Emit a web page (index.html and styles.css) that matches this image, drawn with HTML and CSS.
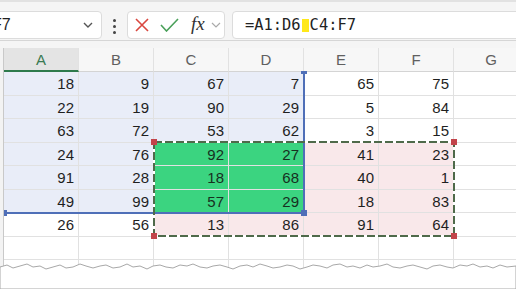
FILE: index.html
```html
<!DOCTYPE html>
<html lang="en">
<head>
  <meta charset="UTF-8" />
  <title>Sheet</title>
  <link rel="stylesheet" href="styles.css">
</head>
<body>
  <div class="toolbar">
    <div class="namebox">
      <span>F7</span>
      <svg class="chev" width="10" height="6" viewBox="0 0 10 6"><path d="M1 1l4 4 4-4" fill="none" stroke="#555" stroke-width="1.4"/></svg>
    </div>
    <div class="dots"><i></i><i></i><i></i></div>
    <div class="fxbox">
      <svg class="cancel" width="14" height="14" viewBox="0 0 14 14"><path d="M1 1l12 12M13 1L1 13" stroke="#d9473f" stroke-width="1.6" fill="none"/></svg>
      <svg class="enter" width="19" height="14" viewBox="0 0 19 14"><path d="M1 7l5.5 6L18 1" stroke="#4aa05a" stroke-width="1.6" fill="none"/></svg>
      <span class="fx">fx</span>
      <svg class="chev small" width="10" height="6" viewBox="0 0 10 6"><path d="M1 1l4 4 4-4" fill="none" stroke="#aaa" stroke-width="1.2"/></svg>
    </div>
    <div class="formula">=A1:D6<span class="hl"> </span>C4:F7</div>
  </div>
  <div class="gap"></div>

  <div class="sheet">
    <div class="stub"></div><div class="hd on">A</div><div class="hd">B</div><div class="hd">C</div><div class="hd">D</div><div class="hd">E</div><div class="hd">F</div><div class="hd">G</div>

    <div class="stub"></div><div class="c b">18</div><div class="c b">9</div><div class="c b">67</div><div class="c b">7</div><div class="c">65</div><div class="c">75</div><div class="c"></div>
    <div class="stub"></div><div class="c b">22</div><div class="c b">19</div><div class="c b">90</div><div class="c b">29</div><div class="c">5</div><div class="c">84</div><div class="c"></div>
    <div class="stub"></div><div class="c b">63</div><div class="c b">72</div><div class="c b">53</div><div class="c b">62</div><div class="c">3</div><div class="c">15</div><div class="c"></div>
    <div class="stub"></div><div class="c b">24</div><div class="c b">76</div><div class="c g">92</div><div class="c g">27</div><div class="c p">41</div><div class="c p">23</div><div class="c"></div>
    <div class="stub"></div><div class="c b">91</div><div class="c b">28</div><div class="c g">18</div><div class="c g">68</div><div class="c p">40</div><div class="c p">1</div><div class="c"></div>
    <div class="stub"></div><div class="c b">49</div><div class="c b">99</div><div class="c g">57</div><div class="c g">29</div><div class="c p">18</div><div class="c p">83</div><div class="c"></div>
    <div class="stub"></div><div class="c">26</div><div class="c">56</div><div class="c p">13</div><div class="c p">86</div><div class="c p">91</div><div class="c p">64</div><div class="c"></div>
    <div class="stub"></div><div class="c"></div><div class="c"></div><div class="c"></div><div class="c"></div><div class="c"></div><div class="c"></div><div class="c"></div>
    <div class="stub"></div><div class="c"></div><div class="c"></div><div class="c"></div><div class="c"></div><div class="c"></div><div class="c"></div><div class="c"></div>

    <!-- range A1:D6 -->
    <div class="range-blue"></div>
    <div class="bh bh-top"></div>
    <div class="bh bh-left"></div>
    <div class="bh bh-corner"></div>

    <!-- range C4:F7, copy marquee -->
    <svg class="ants" width="304" height="98" viewBox="0 0 304 98">
      <rect x="2" y="2" width="300" height="94" fill="none" stroke="#fff" stroke-width="2"/>
      <rect x="2" y="2" width="300" height="94" fill="none" stroke="#4f6a4a" stroke-width="2" stroke-dasharray="8 3"/>
    </svg>
    <div class="rh rh-tl"></div>
    <div class="rh rh-tr"></div>
    <div class="rh rh-bl"></div>
    <div class="rh rh-br"></div>
  </div>

  <svg class="tear" width="516" height="34" viewBox="0 0 516 34">
    <path d="M0 34V12L7 10 13 13 20 11 27 9 33 12 40 11 46 14 53 12 60 10 66 13 73 12 80 9 86 11 93 13 100 11 106 10 113 13 120 12 127 9 133 12 140 11 147 14 153 11 160 10 166 12 173 13 180 10 187 11 193 9 200 12 207 13 213 11 220 10 227 12 233 14 240 11 247 10 253 12 260 9 267 11 273 13 280 12 287 10 293 11 300 14 307 12 313 10 320 11 327 13 333 10 340 9 347 12 353 11 360 13 367 10 373 12 380 11 387 9 393 12 400 13 407 11 413 10 420 12 427 14 433 11 440 10 447 12 453 13 460 10 467 11 473 9 480 12 487 11 493 13 500 10 507 12 516 11V34Z" fill="#fff" stroke="#a8a8a8" stroke-width="1"/>
  </svg>
</body>
</html>
```

FILE: styles.css
```css
body {
  margin: 0;
  width: 516px;
  height: 289px;
  overflow: hidden;
  position: relative;
  background-color: #fff;
  font-family: "Liberation Sans", Arial, sans-serif;
  color: #1f1f1f;
}
.toolbar {
  height: 41px;
  box-sizing: border-box;
  background-color: #f5f5f5;
  border-top: 2px solid #e2e2e2;
  border-bottom: 1px solid #d6d6d6;
  padding-top: 9px;
  display: flex;
  align-items: flex-start;
}
.namebox,
.fxbox,
.formula {
  height: 28px;
  box-sizing: border-box;
  background-color: #fff;
  border: 1px solid #dcdcdc;
  border-radius: 4px;
  display: flex;
  align-items: center;
}
.namebox {
  width: 114px;
  margin-left: -12px;
  padding-left: 3px;
  font-size: 16px;
  justify-content: space-between;
  padding-right: 8px;
}
.chev {
  display: block;
}
.dots {
  width: 25px;
  display: flex;
  flex-direction: column;
  align-items: center;
  gap: 3px;
  padding-top: 8px;
}
.dots i {
  width: 3px;
  height: 3px;
  border-radius: 50%;
  background-color: #444;
}
.fxbox {
  width: 98px;
  padding-left: 7px;
}
.cancel {
  display: block;
}
.enter {
  display: block;
  margin-left: 11px;
}
.fx {
  font-family: "Liberation Serif", serif;
  font-style: italic;
  font-size: 19px;
  color: #333;
  margin-left: 12px;
  margin-top: -2px;
}
.chev.small {
  margin-left: 6px;
}
.formula {
  flex: 1;
  margin-left: 7px;
  margin-right: -10px;
  padding-left: 12px;
  font-family: "DejaVu Sans Mono", monospace;
  font-size: 15.4px;
  color: #222;
}
.hl {
  display: inline-block;
  width: 7px;
  height: 13px;
  margin: 0 1px;
  background-color: #ffe81a;
}
.gap {
  height: 7px;
  background-color: #f5f5f5;
}
.sheet {
  position: relative;
  display: grid;
  grid-template-columns: 4px repeat(7, 75px);
  grid-template-rows: 24px repeat(9, 23.5px);
}
.stub {
  background-color: #f3f3f3;
  border-right: 1px solid #c9c9c9;
}
.hd {
  background-color: #f7f7f7;
  border-right: 1px solid #e2e2e2;
  border-bottom: 1px solid #d4d4d4;
  box-sizing: border-box;
  display: flex;
  align-items: center;
  justify-content: center;
  font-size: 15px;
  color: #606060;
}
.hd.on {
  background-color: #e4e4e4;
  color: #3a7a52;
  border-bottom: 2px solid #2e7a4c;
}
.c {
  box-sizing: border-box;
  border-right: 1px solid #e1e1e1;
  border-bottom: 1px solid #e1e1e1;
  display: flex;
  align-items: center;
  justify-content: flex-end;
  padding: 1px 4px 0 0;
  font-size: 15px;
}
.b {
  background-color: #e9edf8;
}
.p {
  background-color: #f9e8ea;
}
.g {
  background-color: #3bd480;
  color: #17301f;
}
.range-blue {
  position: absolute;
  left: 4px;
  top: 24px;
  width: 301px;
  height: 142px;
  box-sizing: border-box;
  border-right: 2px solid #4f6fb8;
  border-bottom: 2px solid #4f6fb8;
}
.bh {
  position: absolute;
  background-color: #4f6fb8;
}
.bh-top {
  left: 301px;
  top: 23px;
  width: 6px;
  height: 3px;
}
.bh-left {
  left: 4px;
  top: 162px;
  width: 3px;
  height: 6px;
}
.bh-corner {
  left: 301px;
  top: 162px;
  width: 6px;
  height: 6px;
}
.ants {
  position: absolute;
  left: 152px;
  top: 92px;
}
.rh {
  position: absolute;
  width: 6px;
  height: 6px;
  background-color: #c2444a;
}
.rh-tl { left: 151px; top: 91px; }
.rh-tr { left: 451px; top: 91px; }
.rh-bl { left: 151px; top: 185px; }
.rh-br { left: 451px; top: 185px; }
.tear {
  position: absolute;
  left: 0;
  top: 255px;
}
```
